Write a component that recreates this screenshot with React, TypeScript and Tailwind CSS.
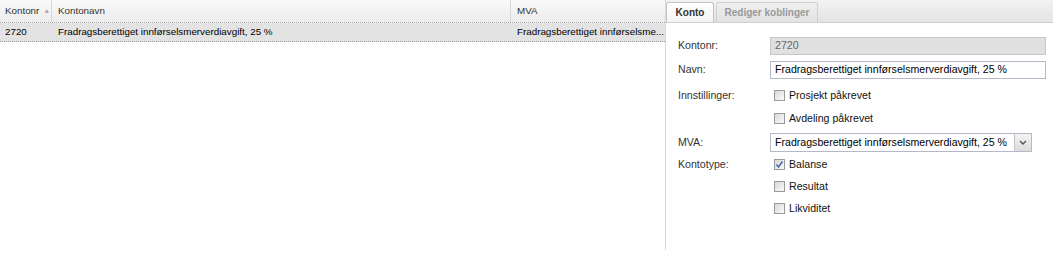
import React from "react";

const font = { fontFamily: "'Liberation Sans', Arial, sans-serif" };

function Check({ checked }: { checked?: boolean }) {
  return (
    <span className="inline-flex w-[11px] h-[11px] border border-[#9a9a9a] bg-gradient-to-br from-[#d8d8d8] to-[#fbfbfb] items-center justify-center shrink-0">
      {checked && (
        <svg width="9" height="9" viewBox="0 0 9 9">
          <path d="M1.5 4.5 L3.5 7 L7.5 1.5" fill="none" stroke="#4a6fb0" strokeWidth="1.6" />
        </svg>
      )}
    </span>
  );
}

function CheckRow({ label, checked }: { label: string; checked?: boolean }) {
  return (
    <div className="flex items-center gap-[4px] h-[12px]">
      <Check checked={checked} />
      <span className="text-[10.6px] text-[#111] leading-none whitespace-nowrap">{label}</span>
    </div>
  );
}

export default function App() {
  return (
    <div className="w-[1062px] h-[272px] bg-white flex" style={font}>
      {/* Grid */}
      <div className="w-[665px] h-[250px] flex flex-col">
        <div className="h-[23px] flex bg-gradient-to-b from-[#fafafa] to-[#ececec] border-b border-dotted border-[#a8a8a8] text-[9.8px] text-[#333]">
          <div className="w-[52px] flex items-center pl-[5px] border-r border-[#d8d8d8] whitespace-nowrap">
            Kontonr <span className="ml-[4px] text-[7px] text-[#aaa]">▲</span>
          </div>
          <div className="w-[459px] flex items-center pl-[6px] border-r border-[#d8d8d8]">Kontonavn</div>
          <div className="flex-1 flex items-center pl-[6px]">MVA</div>
        </div>
        <div className="h-[19px] flex bg-[#e3e3e3] border-b border-dotted border-[#9c9c9c] text-[9.8px] text-[#000]">
          <div className="w-[52px] flex items-center pl-[5px]">2720</div>
          <div className="w-[459px] flex items-center pl-[6px] whitespace-nowrap">Fradragsberettiget innførselsmerverdiavgift, 25 %</div>
          <div className="flex-1 min-w-0 flex items-center pl-[6px] pr-[6px] whitespace-nowrap">
            <span>Fradragsberettiget innførselsme...</span>
          </div>
        </div>
      </div>
      {/* Right panel */}
      <div className="w-[388px] h-[250px] border-l border-[#d8d8d8] flex flex-col">
        <div className="h-[23px] flex items-end gap-[2px] bg-gradient-to-b from-[#f2f2f2] to-[#e4e4e4] border-b border-[#cfcfcf]">
          <div className="h-[20px] w-[48px] border border-b-0 border-[#c4c4c4] rounded-t-[3px] bg-gradient-to-b from-[#ffffff] to-[#f4f4f4] flex items-center justify-center text-[10px] font-bold text-[#333]">
            Konto
          </div>
          <div className="h-[20px] w-[102px] border border-b-0 border-[#cfcfcf] rounded-t-[3px] bg-gradient-to-b from-[#f0f0f0] to-[#e2e2e2] flex items-center justify-center text-[10px] font-bold text-[#999] whitespace-nowrap">
            Rediger koblinger
          </div>
        </div>
        <div className="pl-[12px] pt-[14px] text-[10.6px] text-[#333]">
          <div className="flex items-center h-[18px]">
            <span className="w-[92px]">Kontonr:</span>
            <div className="w-[276px] h-[18px] bg-[#e0e0e0] border border-[#c8c8c8] flex items-center pl-[4px] text-[#666]">2720</div>
          </div>
          <div className="flex items-center h-[18px] mt-[6px]">
            <span className="w-[92px]">Navn:</span>
            <div className="w-[276px] h-[18px] bg-white border border-[#b5b8c8] flex items-center pl-[4px] text-[#000] whitespace-nowrap">
              Fradragsberettiget innførselsmerverdiavgift, 25 %
            </div>
          </div>
          <div className="flex mt-[10px]">
            <span className="w-[96px] leading-[12px]">Innstillinger:</span>
            <div className="flex flex-col gap-[11px]">
              <CheckRow label="Prosjekt påkrevet" />
              <CheckRow label="Avdeling påkrevet" />
            </div>
          </div>
          <div className="flex items-center h-[19px] mt-[9px]">
            <span className="w-[92px]">MVA:</span>
            <div className="w-[262px] h-[19px] bg-white border border-[#b5b8c8] flex">
              <div className="flex-1 flex items-center pl-[4px] text-[#000] whitespace-nowrap overflow-hidden">Fradragsberettiget innførselsmerverdiavgift, 25 %</div>
              <div className="w-[17px] bg-gradient-to-b from-[#f4f4f4] to-[#dcdcdc] border-l border-[#c4c4c4] flex items-center justify-center">
                <svg width="8" height="5" viewBox="0 0 8 5"><path d="M1 1 L4 4 L7 1" fill="none" stroke="#555" strokeWidth="1.4" /></svg>
              </div>
            </div>
          </div>
          <div className="flex mt-[6px]">
            <span className="w-[96px] leading-[12px]">Kontotype:</span>
            <div className="flex flex-col gap-[10px]">
              <CheckRow label="Balanse" checked />
              <CheckRow label="Resultat" />
              <CheckRow label="Likviditet" />
            </div>
          </div>
        </div>
      </div>
    </div>
  );
}
